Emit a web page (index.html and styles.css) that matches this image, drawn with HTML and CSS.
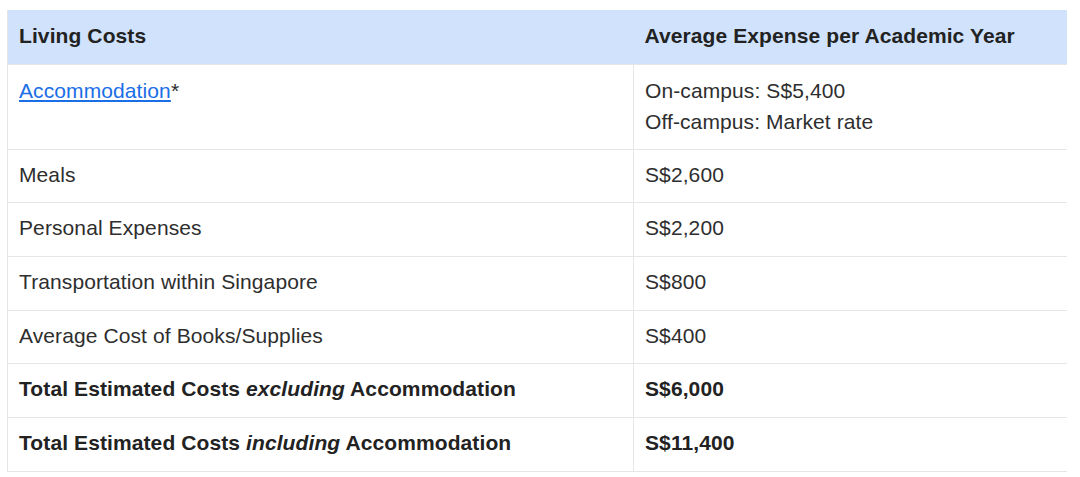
FILE: index.html
```html
<!DOCTYPE html>
<html>
<head>
<meta charset="utf-8">
<link rel="stylesheet" href="styles.css">
</head>
<body>
<div class="wrap">
<table class="costs">
  <thead>
    <tr><th class="c1">Living Costs</th><th class="c2">Average Expense per Academic Year</th></tr>
  </thead>
  <tbody>
    <tr class="multi"><td class="c1"><a href="#">Accommodation</a>*</td><td class="c2">On-campus: S$5,400<br>Off-campus: Market rate</td></tr>
    <tr><td class="c1">Meals</td><td class="c2">S$2,600</td></tr>
    <tr><td class="c1">Personal Expenses</td><td class="c2">S$2,200</td></tr>
    <tr><td class="c1">Transportation within Singapore</td><td class="c2">S$800</td></tr>
    <tr><td class="c1">Average Cost of Books/Supplies</td><td class="c2">S$400</td></tr>
    <tr class="total"><td class="c1">Total Estimated Costs <em>excluding</em> Accommodation</td><td class="c2">S$6,000</td></tr>
    <tr class="total"><td class="c1">Total Estimated Costs <em>including</em> Accommodation</td><td class="c2">S$11,400</td></tr>
  </tbody>
</table>
</div>
</body>
</html>
```
FILE: styles.css
```css
html, body {
  margin: 0;
  padding: 0;
  background: #ffffff;
}
.wrap {
  padding: 10px 0 0 7px;
}
.costs {
  width: 1060px;
  border-collapse: collapse;
  font-family: "Liberation Sans", Arial, sans-serif;
  font-size: 21px;
  letter-spacing: 0.1px;
  line-height: 30.67px;
  color: #2e2e2e;
  border-left: 1px solid #e6e6e6;
  border-bottom: 1px solid #e6e6e6;
}
.costs th {
  background: #d0e2fc;
  color: #222222;
  font-weight: bold;
  text-align: left;
  height: 54px;
  padding: 0 11px;
  box-sizing: border-box;
}
.costs td {
  padding: 10px 11px 12px;
  border-top: 1px solid #e6e6e6;
  vertical-align: top;
}
.costs .multi td {
  line-height: 31px;
}
.costs .c1 {
  width: 626px;
  box-sizing: border-box;
}
.costs td.c2 {
  border-left: 1px solid #e6e6e6;
}
.costs a {
  color: #1a6ee6;
  text-decoration: underline;
}
.total td {
  font-weight: bold;
  color: #222222;
}
```
